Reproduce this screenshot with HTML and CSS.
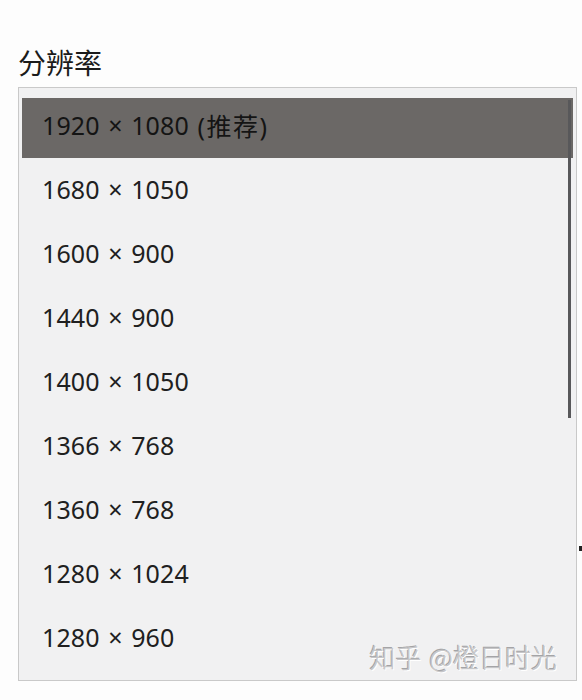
FILE: index.html
```html
<!DOCTYPE html>
<html lang="zh">
<head>
<meta charset="utf-8">
<title>分辨率</title>
<link rel="stylesheet" href="styles.css">
</head>
<body>
<div class="page">
  <div class="label">分辨率</div>
  <div class="panel">
    <ul class="list">
      <li class="item selected">1920 × 1080 <span class="cjk">(推荐)</span></li>
      <li class="item">1680 × 1050</li>
      <li class="item">1600 × 900</li>
      <li class="item">1440 × 900</li>
      <li class="item">1400 × 1050</li>
      <li class="item">1366 × 768</li>
      <li class="item">1360 × 768</li>
      <li class="item">1280 × 1024</li>
      <li class="item">1280 × 960</li>
    </ul>
    <div class="thumb"></div>
    <div class="watermark">知乎 @橙日时光</div>
  </div>
  <div class="mark"></div>
</div>
</body>
</html>
```
FILE: styles.css
```css
html, body {
  margin: 0;
  padding: 0;
  background: #fdfdfd;
}
.page {
  position: relative;
  width: 582px;
  height: 700px;
  padding: 43px 5px 0 18px;
  box-sizing: border-box;
  font-family: "Noto Sans", "Noto Sans CJK SC", sans-serif;
  color: #1b1b1b;
}
.label {
  font-family: "Noto Sans CJK SC", sans-serif;
  font-size: 28px;
  line-height: 38px;
  height: 44px;
}
.panel {
  position: relative;
  width: 559px;
  height: 594px;
  box-sizing: border-box;
  border: 1px solid #c9c9c9;
  background: #f1f1f2;
  padding: 10px 3px 10px 3px;
}
.list {
  list-style: none;
  margin: 0;
  padding: 0;
  display: flex;
  flex-direction: column;
  gap: 4px;
}
.item {
  height: 60px;
  box-sizing: border-box;
  display: flex;
  align-items: center;
  padding: 0 0 6px 20px;
  font-size: 25px;
  letter-spacing: 0.1px;
  word-spacing: 2px;
  color: #202020;
  white-space: pre;
}
.cjk {
  letter-spacing: 1.5px;
}
.item.selected {
  background: #6b6866;
  color: #141414;
}
.thumb {
  position: absolute;
  left: 549px;
  top: 12px;
  width: 3px;
  height: 318px;
  background: #58585a;
}
.watermark {
  position: absolute;
  right: 19px;
  bottom: 5px;
  font-family: "Noto Sans CJK SC", sans-serif;
  font-size: 26px;
  font-weight: 300;
  color: #c6c6c8;
  text-shadow: 1px 1px 0 #ffffff, -1px -1px 0 #a4a4a6;
  word-spacing: 2px;
}
.mark {
  position: absolute;
  left: 579px;
  top: 546px;
  width: 3px;
  height: 5px;
  background: #222;
}
```
